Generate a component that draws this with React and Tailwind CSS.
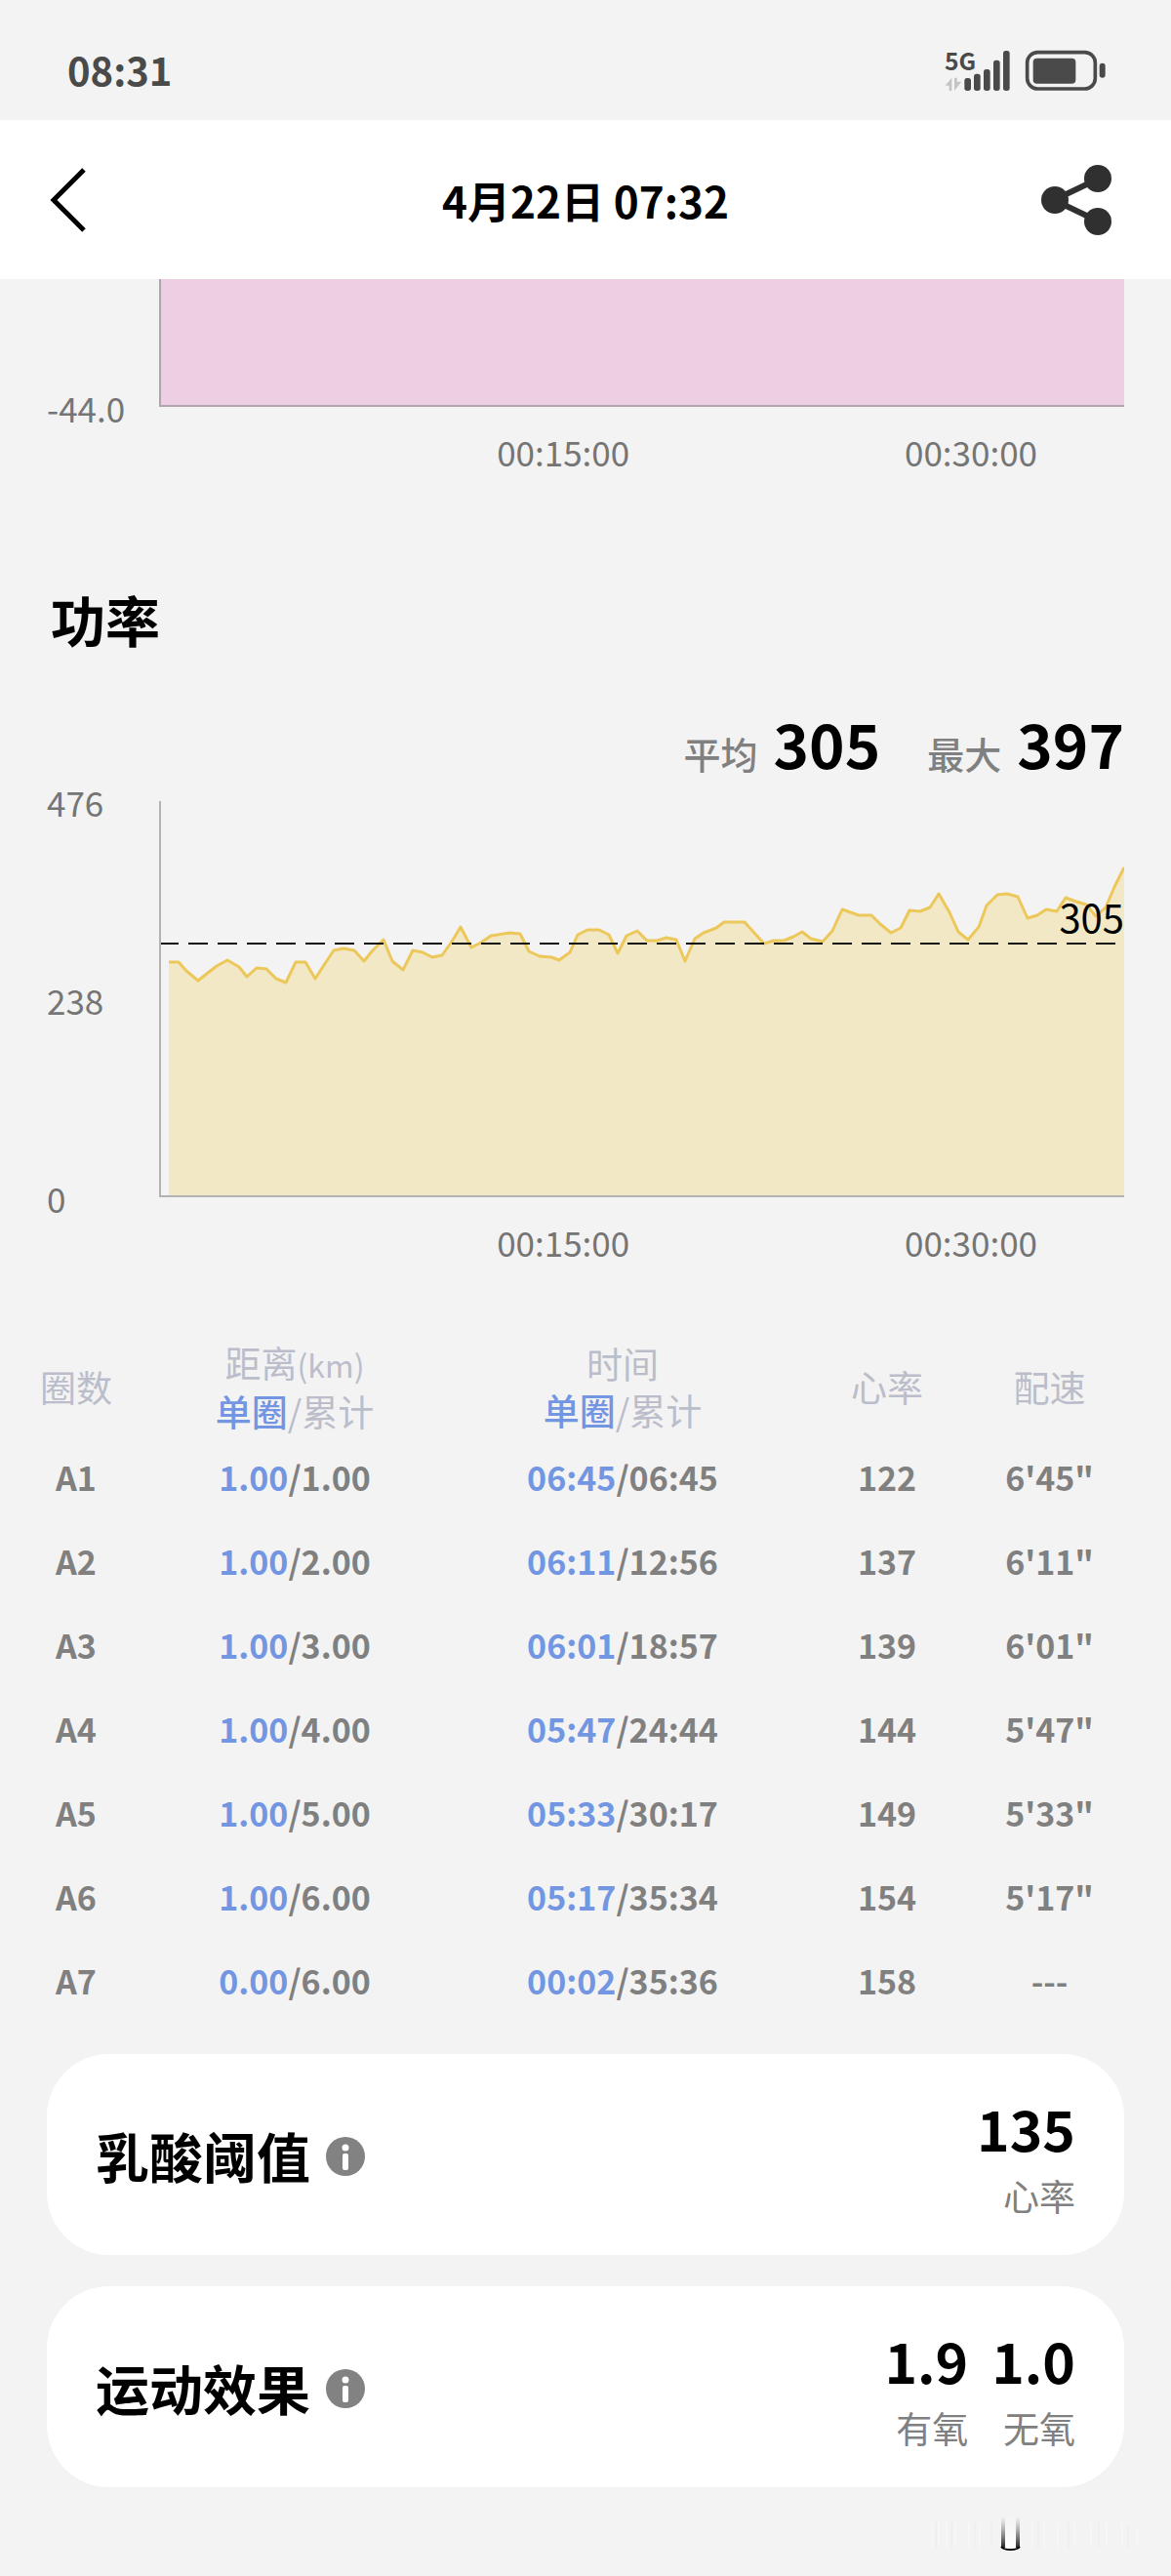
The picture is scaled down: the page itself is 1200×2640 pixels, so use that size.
const LAPS = [
  { id: "A1", km: "1.00", totalKm: "1.00", time: "06:45", total: "06:45", hr: 122, pace: "6'45\"" },
  { id: "A2", km: "1.00", totalKm: "2.00", time: "06:11", total: "12:56", hr: 137, pace: "6'11\"" },
  { id: "A3", km: "1.00", totalKm: "3.00", time: "06:01", total: "18:57", hr: 139, pace: "6'01\"" },
  { id: "A4", km: "1.00", totalKm: "4.00", time: "05:47", total: "24:44", hr: 144, pace: "5'47\"" },
  { id: "A5", km: "1.00", totalKm: "5.00", time: "05:33", total: "30:17", hr: 149, pace: "5'33\"" },
  { id: "A6", km: "1.00", totalKm: "6.00", time: "05:17", total: "35:34", hr: 154, pace: "5'17\"" },
  { id: "A7", km: "0.00", totalKm: "6.00", time: "00:02", total: "35:36", hr: 158, pace: "---" },
];

const POWER_LINE =
  "10,165 20,165 28,174 40,184 50,176 59,169 70,163 82,170 90,180 100,171 110,172 120,182 130,186 140,165 150,165 160,182 169,168 179,153 189,151 200,153 210,164 219,153 230,142 239,164 250,173 260,153 270,155 280,160 290,158 300,144 309,129 320,150 330,145 340,138 359,135 370,136 379,154 390,159 402,160 410,163 421,155 429,137 439,132 451,132 461,137 470,156 479,138 490,133 500,143 510,143 520,140 530,142 539,164 549,141 558,135 571,130 579,124 600,124 609,134 620,146 630,143 640,143 650,139 659,134 668,141 680,144 690,133 700,111 717,117 730,117 739,126 750,135 760,130 769,112 780,113 790,109 799,95 810,114 819,134 829,142 840,129 848,107 859,96 869,95 880,98 890,120 900,117 909,111 920,113 929,99 940,103 950,106 960,118 970,109 979,88 989,68";

function StatusBar() {
  return (
    <div className="flex items-center justify-between bg-[#f3f3f3] h-[123px] pl-[69px] pr-[66px] pt-[22px]">
      <span className="text-[40px] leading-[60px] pb-1 font-bold text-[#4a4a4a]">08:31</span>
      <svg viewBox="84 30 498 195" className="w-[166px] h-[65px]" fill="#4a4a4a">
        <text x="84" y="126" fontSize="74" fontWeight="700" fontFamily="'Noto Sans CJK SC', sans-serif">5G</text>
        <path d="M106 149v40h-8v-16H86zM114 189v-40h8v12h14z" fill="#c4c4c4" />
        <rect x="145" y="150" width="20" height="39" rx="8" />
        <rect x="174" y="137" width="20" height="52" rx="8" />
        <rect x="204" y="123" width="20" height="66" rx="8" />
        <rect x="234" y="95" width="20" height="94" rx="8" />
        <rect x="264" y="66" width="20" height="123" rx="8" />
        <rect x="338" y="71" width="209" height="112" rx="32" fill="none" stroke="#4a4a4a" strokeWidth="11" />
        <rect x="356" y="89" width="131" height="78" rx="12" />
        <rect x="560" y="104" width="18" height="45" rx="9" />
      </svg>
    </div>
  );
}

function Header() {
  return (
    <header className="flex items-center bg-white h-[163px] px-[50px]">
      <div className="flex-1">
        <button aria-label="返回" className="block">
          <svg viewBox="0 0 40 68" className="w-10 h-[68px]" fill="none" stroke="#000" strokeWidth="5">
            <path d="M36 3L5 34l31 31" />
          </svg>
        </button>
      </div>
      <h1 className="text-[44px] leading-[64px] font-bold text-black">4月22日 07:32</h1>
      <div className="flex flex-1 justify-end">
        <button aria-label="分享" className="mr-2.5">
          <svg viewBox="0 0 74 74" className="w-[74px] h-[74px]" fill="#303030">
            <path d="M60 15L14 37l46 22" fill="none" stroke="#303030" strokeWidth="6" />
            <circle cx="59" cy="15" r="14" />
            <circle cx="15" cy="37" r="14" />
            <circle cx="59" cy="59" r="14" />
          </svg>
        </button>
      </div>
    </header>
  );
}

function TimeAxis() {
  return (
    <div className="flex pt-[22px] text-[35px] leading-[48px] text-[#757575]">
      <span className="ml-[35%]">00:15:00</span>
      <span className="ml-auto mr-[9%]">00:30:00</span>
    </div>
  );
}

function InfoCard({ title, values }) {
  return (
    <section className="flex items-center justify-between bg-white rounded-[64px] h-[206px] px-[50px]">
      <div className="flex items-center gap-4 pt-1">
        <h2 className="text-[55px] leading-[80px] pb-1 font-bold text-black">{title}</h2>
        <button aria-label={title + "说明"}>
          <svg viewBox="0 0 40 40" className="w-10 h-10">
            <circle cx="20" cy="20" r="20" fill="#828282" />
            <circle cx="20" cy="11" r="3.5" fill="#fff" />
            <rect x="17" y="17" width="6" height="17" rx="2" fill="#fff" />
          </svg>
        </button>
      </div>
      <div className="flex gap-6">
        {values.map((v) => (
          <div key={v.label} className="text-right">
            <p className="text-[57px] leading-[84px] font-bold text-black">{v.value}</p>
            <p className="text-[37px] leading-[56px] text-[#808080]">{v.label}</p>
          </div>
        ))}
      </div>
    </section>
  );
}

export default function App() {
  return (
    <div className="min-h-screen bg-[#f3f3f3] font-['Noto_Sans_CJK_SC',sans-serif]">
      <StatusBar />
      <Header />

      <main>
        {/* Tail of the previous chart */}
        <section className="flex px-12">
          <div className="flex items-end w-[115px] h-[153px]">
            <span className="text-[35px] leading-[42px] text-[#757575]">-44.0</span>
          </div>
          <div className="flex-1">
            <div className="h-[131px] bg-[#edcee2] border-l-2 border-b-2 border-[#b0a5ac]" />
            <TimeAxis />
          </div>
        </section>

        <section className="px-12 pt-[107px]">
          <h2 className="text-[56px] leading-[80px] pl-1 font-bold text-black">功率</h2>
          <div className="flex items-baseline justify-end gap-12 pt-[42px] pb-[15px]">
            <p className="flex items-baseline gap-4">
              <span className="text-[38px] font-medium text-[#808080]">平均</span>
              <span className="text-[62px] leading-[90px] font-bold text-black">305</span>
            </p>
            <p className="flex items-baseline gap-4">
              <span className="text-[38px] font-medium text-[#808080]">最大</span>
              <span className="text-[62px] leading-[90px] font-bold text-black">397</span>
            </p>
          </div>

          <div className="flex">
            <div className="flex flex-col justify-between w-[115px] h-[448px] -mt-5 text-[35px] leading-[42px] text-[#757575]">
              <span>476</span>
              <span>238</span>
              <span>0</span>
            </div>
            <div className="flex-1">
              <div className="relative">
                <svg viewBox="0 0 989 406" preserveAspectRatio="none" className="block w-full h-[406px]" fill="none">
                  <polygon points={"10,406 " + POWER_LINE + " 989,406"} fill="#f2e8c6" />
                  <polyline points={POWER_LINE} stroke="#ecc75a" strokeWidth="3" strokeLinejoin="round" />
                  <path d="M0 146H989" stroke="#111" strokeWidth="2" strokeDasharray="20 10" />
                  <path d="M1 0V405H989" stroke="#b3b3b3" strokeWidth="2" />
                </svg>
                <span className="absolute right-0 top-[94px] text-[40px] leading-[48px] text-black">305</span>
              </div>
              <TimeAxis />
            </div>
          </div>
        </section>

        <div className="pr-[39px] pt-[74px]">
          <table className="w-full table-fixed text-center">
            <colgroup>
              <col className="w-[156px]" />
              <col className="w-[292px]" />
              <col className="w-[380px]" />
              <col className="w-[162px]" />
              <col className="w-[171px]" />
            </colgroup>
            <thead className="text-[37px] leading-[48px] text-[#bbbdca]">
              <tr className="h-[100px]">
                <th className="font-normal">圈数</th>
                <th className="font-normal">
                  距离<span className="text-[32px]">(km)</span>
                  <br />
                  <span className="font-medium text-[#7396e2]">单圈</span>/累计
                </th>
                <th className="font-normal">
                  时间
                  <br />
                  <span className="font-medium text-[#7396e2]">单圈</span>/累计
                </th>
                <th className="font-normal">心率</th>
                <th className="font-normal">配速</th>
              </tr>
            </thead>
            <tbody className="text-[34px] leading-[48px] font-bold text-[#808080]">
              {LAPS.map((lap) => (
                <tr key={lap.id} className="h-[86px]">
                  <td>{lap.id}</td>
                  <td>
                    <span className="text-[#7396e2]">{lap.km}</span>/{lap.totalKm}
                  </td>
                  <td>
                    <span className="text-[#7396e2]">{lap.time}</span>/{lap.total}
                  </td>
                  <td>{lap.hr}</td>
                  <td>{lap.pace}</td>
                </tr>
              ))}
            </tbody>
          </table>
        </div>

        <div className="flex flex-col gap-8 px-12 pt-8">
          <InfoCard title="乳酸阈值" values={[{ value: "135", label: "心率" }]} />
          <InfoCard
            title="运动效果"
            values={[
              { value: "1.9", label: "有氧" },
              { value: "1.0", label: "无氧" },
            ]}
          />
        </div>
      </main>

      <footer className="flex justify-end pt-[28px] pr-[25px]">
        <svg viewBox="0 0 225 40" className="w-[225px] h-10">
          <defs>
            <linearGradient id="fade" x1="0" y1="0" x2="0" y2="1">
              <stop offset="0" stopColor="#777" stopOpacity="0" />
              <stop offset="1" stopColor="#222" />
            </linearGradient>
            <linearGradient id="glow" x1="0" y1="0" x2="0" y2="1">
              <stop offset="0" stopColor="#fff" stopOpacity="0" />
              <stop offset="1" stopColor="#fff" />
            </linearGradient>
          </defs>
          <path d="M5 8v26M12 4v30M20 6v28M29 8v26M43 8v26M54 8v26M108 6v28M120 8v26M134 8v26M151 8v26M168 8v26M184 8v26M200 8v26M215 14v20" stroke="#f6f6f6" strokeWidth="2" />
          <path d="M9 8v26M25 8v26M49 8v26M66 8v26M114 8v26M145 8v26M176 8v26M206 12v22" stroke="#efefef" strokeWidth="2" />
          <rect x="80" y="2" width="12" height="32" fill="url(#glow)" />
          <rect x="76" y="2" width="4" height="32" fill="url(#fade)" />
          <rect x="91" y="2" width="4" height="32" fill="url(#fade)" />
          <path d="M76 33c3 4 16 4 19 0" stroke="#000" strokeWidth="2" fill="none" />
        </svg>
      </footer>
    </div>
  );
}
